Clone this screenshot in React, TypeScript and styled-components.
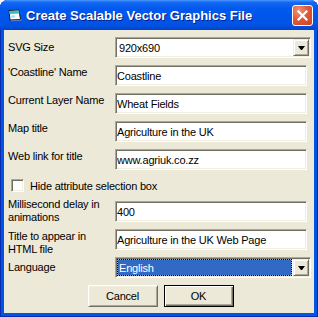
import React from 'react';
import styled, { createGlobalStyle } from 'styled-components';

const GlobalStyle = createGlobalStyle`
  html, body {
    margin: 0;
    padding: 0;
    background: #ffffff;
  }
`;

const Window = styled.div`
  width: 318px;
  height: 317px;
  box-sizing: border-box;
  display: flex;
  flex-direction: column;
  background: #0055e5;
  border-radius: 8px 8px 0 0;
  overflow: hidden;
  box-shadow: inset 1px 0 #0a2cb0, inset -1px 0 #0a2cb0, inset 0 -1px #0a2cb0;
  font-family: "Liberation Sans", Arial, sans-serif;
`;

const TitleBar = styled.div`
  height: 30px;
  flex: none;
  display: flex;
  align-items: center;
  padding: 0 5px 0 7px;
  background: linear-gradient(180deg, #4a9aff 0%, #1468f2 8%, #0058ee 30%, #0056ea 60%, #0052e2 85%, #0044cc 100%);
`;

const TitleText = styled.div`
  flex: 1;
  margin-left: 3px;
  color: #ffffff;
  font-weight: 700;
  font-size: 13px;
  text-shadow: 1px 1px #0a1e8c;
  white-space: nowrap;
`;

const CloseButton = styled.div`
  width: 21px;
  height: 21px;
  box-sizing: border-box;
  border: 1px solid #ffffff;
  border-radius: 3px;
  background: radial-gradient(circle at 30% 25%, #f0967a 0%, #e2593a 45%, #cc4220 100%);
  display: flex;
  align-items: center;
  justify-content: center;
  margin-top: 1px;
`;

const Body = styled.div`
  flex: 1;
  margin: 0 4px 4px;
  background: #ece9d8;
  padding: 7px 3px 6px 4px;
  display: flex;
  flex-direction: column;
  gap: 7px;
  font-size: 11px;
  letter-spacing: -0.2px;
  color: #000000;
`;

const Row = styled.div<{ $h: number }>`
  display: grid;
  grid-template-columns: 107px auto;
  align-items: start;
  height: ${p => p.$h}px;
`;

const Label = styled.div<{ $top: number }>`
  margin-top: ${p => p.$top}px;
  line-height: 13px;
  white-space: nowrap;
`;

const TextBox = styled.input`
  width: 192px;
  height: 21px;
  box-sizing: border-box;
  margin: 0;
  padding: 0 1px;
  border: 1px solid;
  border-color: #aca899 #ffffff #ffffff #aca899;
  box-shadow: inset 1px 1px #716f64, inset -1px -1px #f1efe2;
  background: #ffffff;
  font: inherit;
  letter-spacing: inherit;
  color: #000000;
  outline: none;
`;

const Combo = styled.div`
  width: 196px;
  height: 21px;
  box-sizing: border-box;
  padding: 1px;
  border: 1px solid;
  border-color: #aca899 #ffffff #ffffff #aca899;
  box-shadow: inset 1px 1px #716f64, inset -1px -1px #f1efe2;
  background: #ffffff;
  display: flex;
  gap: 1px;
`;

const ComboText = styled.div<{ $selected?: boolean }>`
  flex: 1;
  box-sizing: border-box;
  display: flex;
  align-items: center;
  padding-left: 1px;
  border: 1px ${p => (p.$selected ? 'dotted #000000' : 'solid transparent')};
  background: ${p =>
    p.$selected ? 'linear-gradient(#316ac5, #316ac5) padding-box, #d9a43a border-box' : 'transparent'};
  color: ${p => (p.$selected ? '#ffffff' : '#000000')};
`;

const DropButton = styled.div`
  width: 16px;
  box-sizing: border-box;
  background: #ece9d8;
  border: 1px solid;
  border-color: #f1efe2 #716f64 #716f64 #f1efe2;
  box-shadow: inset 1px 1px #ffffff, inset -1px -1px #aca899;
  display: flex;
  align-items: center;
  justify-content: center;
`;

const Arrow = styled.div`
  width: 1px;
  height: 0;
  border-left: 3px solid transparent;
  border-right: 3px solid transparent;
  border-top: 4px solid #000000;
  margin-top: 1px;
`;

const CheckRow = styled.div`
  height: 17px;
  display: flex;
  align-items: center;
  gap: 6px;
  padding-left: 3px;
`;

const CheckBox = styled.div`
  width: 13px;
  height: 13px;
  box-sizing: border-box;
  border: 1px solid;
  border-color: #aca899 #ffffff #ffffff #aca899;
  box-shadow: inset 1px 1px #716f64, inset -1px -1px #f1efe2;
  background: #ffffff;
`;

const ButtonRow = styled.div`
  height: 22px;
  display: flex;
  justify-content: center;
  gap: 6px;
  padding-left: 2px;
`;

const Button = styled.div<{ $default?: boolean }>`
  width: 70px;
  height: 22px;
  box-sizing: border-box;
  display: flex;
  align-items: center;
  justify-content: center;
  background: #ece9d8;
  font-size: 11px;
  border: 1px solid;
  border-color: ${p => (p.$default ? '#000000' : '#ffffff #716f64 #716f64 #ffffff')};
  box-shadow: ${p =>
    p.$default
      ? 'inset 1px 1px #ffffff, inset -1px -1px #716f64, inset -2px -2px #aca899'
      : 'inset 1px 1px #f1efe2, inset -1px -1px #aca899'};
`;

const WindowIcon = () => (
  <svg width="16" height="16" viewBox="0 0 16 16">
    <path d="M2 3.5 L12 3 L13.5 12.5 L3 13 Z" fill="#ffffff" stroke="#1a1a1a" strokeWidth="1" />
    <path d="M2.2 4 L12 3.5 L12.4 6.5 L2.5 7 Z" fill="#2fc1c4" />
    <path d="M4 8.5 L8 8.3 L8.2 10.5 L4.2 10.7 Z" fill="#9ee7ea" />
    <path d="M13.7 12.8 L14.5 13.2 L4 13.8" stroke="#6d7fb8" strokeWidth="1" fill="none" />
  </svg>
);

const CloseIcon = () => (
  <svg width="11" height="11" viewBox="0 0 11 11">
    <path d="M1.5 1.5 L9.5 9.5 M9.5 1.5 L1.5 9.5" stroke="#ffffff" strokeWidth="2.2" strokeLinecap="square" />
  </svg>
);

interface Field {
  label: string;
  value: string;
  kind: 'text' | 'combo';
  top: number;
  selected?: boolean;
}

const topFields: Field[] = [
  { label: 'SVG Size', value: '920x690', kind: 'combo', top: 4 },
  { label: "'Coastline' Name", value: 'Coastline', kind: 'text', top: 1 },
  { label: 'Current Layer Name', value: 'Wheat Fields', kind: 'text', top: 1 },
  { label: 'Map title', value: 'Agriculture in the UK', kind: 'text', top: 1 },
  { label: 'Web link for title', value: 'www.agriuk.co.zz', kind: 'text', top: 1 },
];

const bottomFields: Field[] = [
  { label: 'Millisecond delay in\nanimations', value: '400', kind: 'text', top: -3 },
  { label: 'Title to appear in\nHTML file', value: 'Agriculture in the UK Web Page', kind: 'text', top: 1 },
  { label: 'Language', value: 'English', kind: 'combo', top: 4, selected: true },
];

const FieldRow: React.FC<{ field: Field }> = ({ field }) => (
  <Row $h={21}>
    <Label $top={field.top}>
      {field.label.split('\n').map(line => (
        <div key={line}>{line}</div>
      ))}
    </Label>
    {field.kind === 'combo' ? (
      <Combo>
        <ComboText $selected={field.selected}>{field.value}</ComboText>
        <DropButton>
          <Arrow />
        </DropButton>
      </Combo>
    ) : (
      <TextBox readOnly value={field.value} />
    )}
  </Row>
);

export default function App() {
  return (
    <>
      <GlobalStyle />
      <Window>
        <TitleBar>
          <WindowIcon />
          <TitleText>Create Scalable Vector Graphics File</TitleText>
          <CloseButton>
            <CloseIcon />
          </CloseButton>
        </TitleBar>
        <Body>
          {topFields.map(f => (
            <FieldRow key={f.label} field={f} />
          ))}
          <CheckRow>
            <CheckBox />
            <span>Hide attribute selection box</span>
          </CheckRow>
          {bottomFields.map(f => (
            <FieldRow key={f.label} field={f} />
          ))}
          <ButtonRow>
            <Button>Cancel</Button>
            <Button $default>OK</Button>
          </ButtonRow>
        </Body>
      </Window>
    </>
  );
}
